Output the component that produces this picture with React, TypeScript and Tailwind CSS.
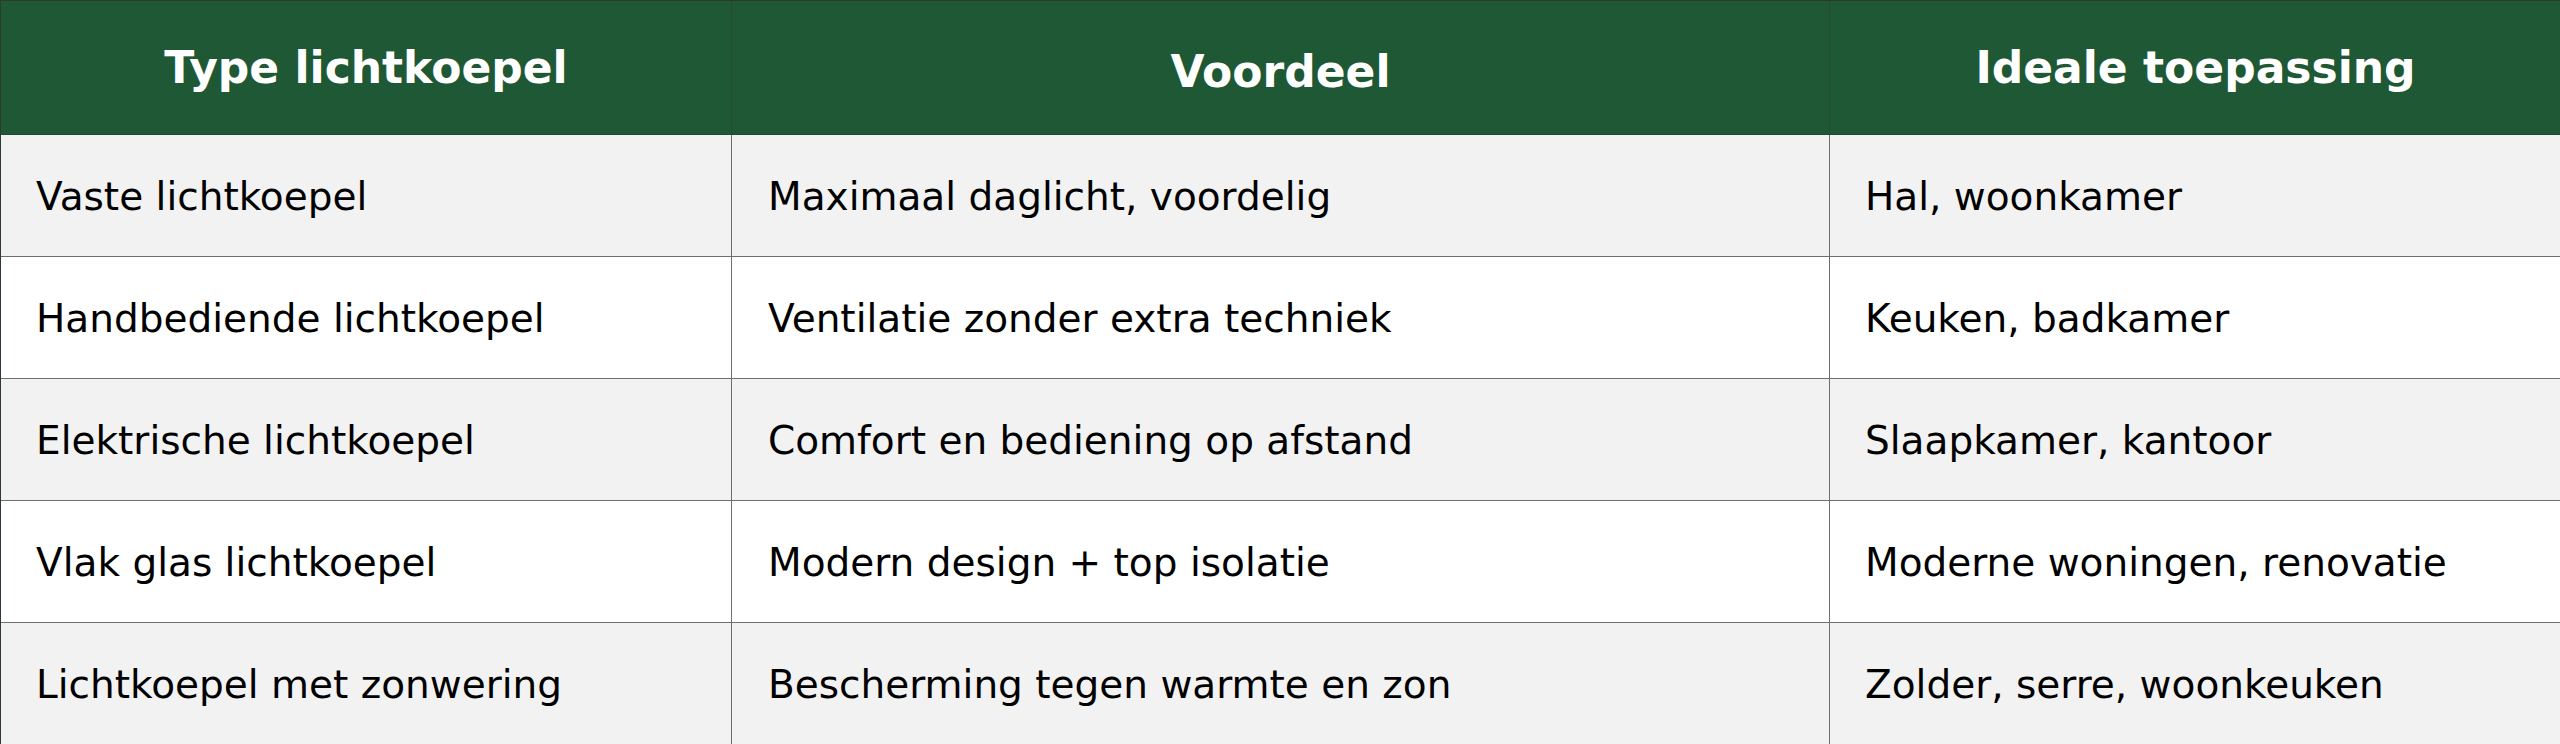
const rows = [
  ["Vaste lichtkoepel", "Maximaal daglicht, voordelig", "Hal, woonkamer"],
  ["Handbediende lichtkoepel", "Ventilatie zonder extra techniek", "Keuken, badkamer"],
  ["Elektrische lichtkoepel", "Comfort en bediening op afstand", "Slaapkamer, kantoor"],
  ["Vlak glas lichtkoepel", "Modern design + top isolatie", "Moderne woningen, renovatie"],
  ["Lichtkoepel met zonwering", "Bescherming tegen warmte en zon", "Zolder, serre, woonkeuken"],
];

export default function App() {
  return (
    <div className="w-[2560px] h-[744px] overflow-hidden bg-white font-['DejaVu_Sans',sans-serif]">
      <div className="border-t border-l border-[#2b3b30]">
        {/* kop */}
        <div className="grid grid-cols-[731px_1098px_731px] h-[134px] bg-[#1f5834] border-b border-[#2c4634] text-white text-[44px] font-bold">
          <div className="flex items-center justify-center border-r border-[#2c4634]">Type lichtkoepel</div>
          <div className="flex items-center justify-center border-r border-[#2c4634] pt-[9px]">Voordeel</div>
          <div className="flex items-center justify-center">Ideale toepassing</div>
        </div>

        {rows.map((row, i) => (
          <div
            key={row[0]}
            className={`grid grid-cols-[731px_1098px_731px] h-[122px] border-b border-[#6e6e6e] text-[39px] text-black ${
              i % 2 === 0 ? "bg-[#f2f2f2]" : "bg-white"
            }`}
          >
            <div className="flex items-center pl-[35px] pt-[3px] border-r border-[#6e6e6e]">{row[0]}</div>
            <div className="flex items-center pl-[36px] pt-[4px] border-r border-[#6e6e6e]">{row[1]}</div>
            <div className="flex items-center pl-[35px] pt-[4px]">{row[2]}</div>
          </div>
        ))}
      </div>
    </div>
  );
}
